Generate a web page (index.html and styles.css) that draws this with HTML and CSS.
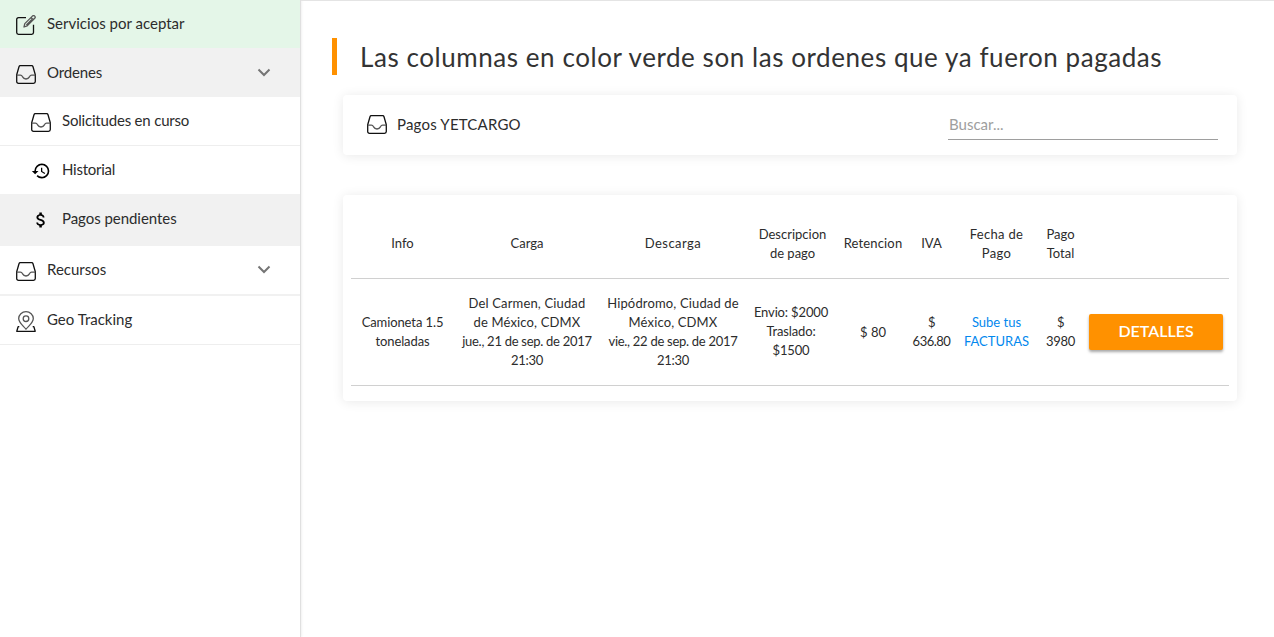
FILE: index.html
```html
<!DOCTYPE html>
<html lang="es">
<head>
<meta charset="utf-8">
<title>Pagos pendientes</title>
<link rel="stylesheet" href="styles.css">
</head>
<body>
<svg class="defs" aria-hidden="true">
  <symbol id="inbox" viewBox="0 0 20 19">
    <path d="M4.300.7h11.400c.7 0 1.100.3 1.300 1l2.300 8v6.800c0 1.100-.7 1.800-1.800 1.800h-15C1.400 18.300.7 17.600.7 16.500V9.700L3 1.700c.2-.7.6-1 1.300-1z"/>
    <path class="fine" d="M.7 10.200h3.700c1.400 0 1.700.7 2.200 1.700.7 1.400 1.700 2.100 3.400 2.100s2.700-.7 3.400-2.100c.5-1 .8-1.700 2.200-1.700h3.700"/>
  </symbol>
  <symbol id="chevron" viewBox="0 0 14 9"><path d="M1.500 1.500 7 7l5.500-5.500"/></symbol>
</svg>
<div class="layout">
  <nav class="sidebar">
    <a class="item item-new">
      <svg class="icon edit" viewBox="0 0 20 20"><path d="M10 2.700H2.500C1.300 2.700.7 3.400.7 4.500v13c0 1.100.7 1.800 1.800 1.800h13.200c1.100 0 1.800-.7 1.800-1.800V9.800"/><path class="fine" d="M8 12l.8-3.400 7.600-7.500c.7-.6 1.700-.6 2.300 0s.6 1.600 0 2.200l-7.500 7.600zM15 2.500l2.300 2.300M10.400 10l5.500-5.500"/></svg>
      <span class="t-servicios">Servicios por aceptar</span>
    </a>
    <a class="item item-open">
      <svg class="icon inbox"><use href="#inbox"/></svg>
      <span class="t-ordenes">Ordenes</span>
      <svg class="chevron"><use href="#chevron"/></svg>
    </a>
    <a class="item sub">
      <svg class="icon inbox"><use href="#inbox"/></svg>
      <span class="t-solicitudes">Solicitudes en curso</span>
    </a>
    <a class="item sub item-history">
      <svg class="icon solid" viewBox="0 0 24 24"><path d="M13 3a9 9 0 0 0-9 9H1l3.890 3.890.07.140L9 12H6c0-3.870 3.130-7 7-7s7 3.130 7 7-3.130 7-7 7c-1.930 0-3.680-.79-4.940-2.060l-1.420 1.420A8.950 8.950 0 0 0 13 21a9 9 0 0 0 0-18zm-1 5v5l4.280 2.540.72-1.210-3.500-2.080V8H12z"/></svg>
      <span class="t-historial">Historial</span>
    </a>
    <a class="item sub item-active">
      <svg class="icon solid" viewBox="0 0 24 24"><path d="M11.800 10.900c-2.270-.59-3-1.200-3-2.150 0-1.090 1.010-1.850 2.700-1.850 1.780 0 2.440.85 2.500 2.100h2.210c-.07-1.720-1.120-3.300-3.210-3.810V3h-3v2.160c-1.940.42-3.500 1.680-3.500 3.610 0 2.310 1.910 3.460 4.700 4.130 2.500.6 3 1.480 3 2.410 0 .69-.49 1.790-2.700 1.790-2.060 0-2.870-.92-2.980-2.100h-2.200c.12 2.190 1.760 3.420 3.680 3.830V21h3v-2.150c1.950-.37 3.500-1.500 3.500-3.550 0-2.840-2.430-3.810-4.700-4.400z"/></svg>
      <span class="t-pagos">Pagos pendientes</span>
    </a>
    <a class="item item-resources">
      <svg class="icon inbox"><use href="#inbox"/></svg>
      <span class="t-recursos">Recursos</span>
      <svg class="chevron"><use href="#chevron"/></svg>
    </a>
    <a class="item item-geo">
      <svg class="icon geo" viewBox="0 0 20 21"><path d="M3.300 15.700H2.100L.8 20.300h18.400l-1.300-4.600h-1.200"/><path class="fine" d="M10 18.200C6.800 14.400 2.700 11.700 2.700 7.500a7.300 6.800 0 0 1 14.600 0c0 4.200-4.100 6.900-7.300 10.700z"/><circle class="fine" cx="10" cy="7.700" r="2.800"/></svg>
      <span class="t-geo">Geo Tracking</span>
    </a>
  </nav>
  <main class="content">
    <h1 class="title"><span class="t-title">Las columnas en color verde son las ordenes que ya fueron pagadas</span></h1>
    <section class="card toolbar">
      <svg class="icon inbox"><use href="#inbox"/></svg>
      <span class="t-brand">Pagos YETCARGO</span>
      <input class="search" type="text" placeholder="Buscar...">
    </section>
    <section class="card orders">
      <table>
        <colgroup><col class="c-info"><col class="c-place"><col class="c-place"><col class="c-desc"><col class="c-ret"><col class="c-iva"><col class="c-date"><col class="c-total"><col></colgroup>
        <thead>
          <tr><th>Info</th><th>Carga</th><th class="descarga">Descarga</th><th>Descripcion<br>de pago</th><th class="retencion">Retencion</th><th>IVA</th><th class="fecha">Fecha de<br>Pago</th><th>Pago<br>Total</th><th></th></tr>
        </thead>
        <tbody>
          <tr>
            <td class="info">Camioneta 1.5<br>toneladas</td>
            <td><span class="place">Del Carmen, Ciudad<br>de México, CDMX</span><br><span class="date">jue., 21 de sep. de 2017</span><br><span class="date">21:30</span></td>
            <td><span class="place">Hipódromo, Ciudad de<br>México, CDMX</span><br><span class="date">vie., 22 de sep. de 2017</span><br><span class="date">21:30</span></td>
            <td class="cost">Envio: $2000<br>Traslado:<br>$1500</td>
            <td>$ 80</td>
            <td class="iva">$<br>636.80</td>
            <td><a class="link">Sube tus<br>FACTURAS</a></td>
            <td class="total">$<br>3980</td>
            <td class="action"><button class="details">DETALLES</button></td>
          </tr>
        </tbody>
      </table>
    </section>
  </main>
</div>
</body>
</html>
```
FILE: styles.css
```css
* { box-sizing: border-box; }
body { margin: 0; background: #fff; color: #2c2c2c; font: 15px Lato, sans-serif; }
.defs { position: absolute; width: 0; height: 0; }
.layout { display: flex; height: 637px; overflow: hidden; }

.sidebar { width: 301px; flex: none; border-right: 1px solid #e0e0e0; box-shadow: 1px 0 2px rgba(0,0,0,.06); }
.item { display: flex; align-items: center; height: 49px; padding: 0 29px 0 16px; background: #fff; white-space: nowrap; }
.item span { margin-left: 11px; padding-bottom: 2px; }
.icon { flex: none; fill: none; stroke: #111; stroke-width: 1.3; stroke-linejoin: round; }
.fine { stroke: #555; stroke-width: 1.300; }
.icon.edit { width: 20px; height: 20px; margin-top: 2px; }
.icon.inbox { width: 20px; height: 19px; margin-top: 3px; }
.icon.geo { width: 20px; height: 21px; margin-top: 3px; }
.icon.solid { fill: #000; stroke: none; width: 20px; height: 20px; margin-top: 2px; }
.chevron { width: 14px; height: 9px; margin: 0 0 1px auto; fill: none; stroke: #757575; stroke-width: 2; }
.item-new { height: 48px; background: #e4f6e8; }
.item-open, .item-active { background: #f1f1f1; }
.sub { padding-left: 31px; border-bottom: 1px solid #eee; }
.item-history { height: 48px; border-bottom: 0; }
.item-active { height: 52px; padding-bottom: 2px; border-bottom: 0; }
.item-resources { height: 50px; border-bottom: 2px solid #f1f1f1; }
.item-geo { border-bottom: 1px solid #eee; }
.t-servicios { letter-spacing: .01px; }
.t-ordenes { letter-spacing: -.15px; }
.t-solicitudes { letter-spacing: -.19px; }
.t-historial { letter-spacing: -.25px; }
.t-pagos { letter-spacing: -.05px; }

.content { flex: 1; border-top: 1px solid #e4e4e4; padding: 37px 37px 0 31px; }
.title { margin: 0; height: 37px; border-left: 5px solid #ff9100; padding-left: 23px; font-size: 26px; font-weight: 400; line-height: 38px; letter-spacing: .565px; white-space: nowrap; color: #333; }
.card { margin-left: 11px; background: #fff; border-radius: 4px; box-shadow: 0 1px 12px rgba(0,0,0,.09); }
.toolbar { display: flex; align-items: center; height: 60px; margin-top: 20px; padding: 0 19px 2px 24px; }
.toolbar .icon { margin-top: 1px; }
.toolbar span { margin-left: 10px; letter-spacing: .2px; }
.search { width: 270px; height: 31px; margin: 0 0 0 auto; padding: 0 1px; border: 0; border-bottom: 1px solid #9e9e9e; border-radius: 0; outline: 0; background: none; font: 15px Lato, sans-serif; }
.search::placeholder { color: #9e9e9e; opacity: 1; }

.orders { height: 206px; margin-top: 40px; padding: 14px 8px 0; }
table { width: 878px; table-layout: fixed; border-collapse: separate; border-spacing: 0; font-size: 13px; line-height: 19px; }
th, td { padding: 0; border-bottom: 1px solid #d0d0d0; font-weight: 400; text-align: center; vertical-align: middle; white-space: nowrap; }
th { height: 70px; }
td { height: 107px; }
.c-info { width: 103px; }
.c-place { width: 146px; }
.c-desc { width: 93px; }
.c-ret { width: 68px; }
.c-iva { width: 49px; }
.c-date { width: 81px; }
.c-total { width: 47px; }
.descarga { letter-spacing: .45px; }
.retencion, .place { letter-spacing: .15px; }
.fecha { letter-spacing: .3px; }
.info { letter-spacing: -.1px; }
.date { letter-spacing: -.28px; }
.cost { padding: 0 3px 2px 0; letter-spacing: -.15px; }
.iva { letter-spacing: -.5px; }
.total { letter-spacing: -.3px; }
.link { color: #0288ee; }
.details { display: block; width: 134px; height: 36px; margin: 0 0 0 5px; padding: 0 0 3px; border: 0; border-radius: 2px; background: #ff9100; color: #fff; font: 600 16px Lato, sans-serif; box-shadow: 0 2px 3px rgba(0,0,0,.35); }
```
